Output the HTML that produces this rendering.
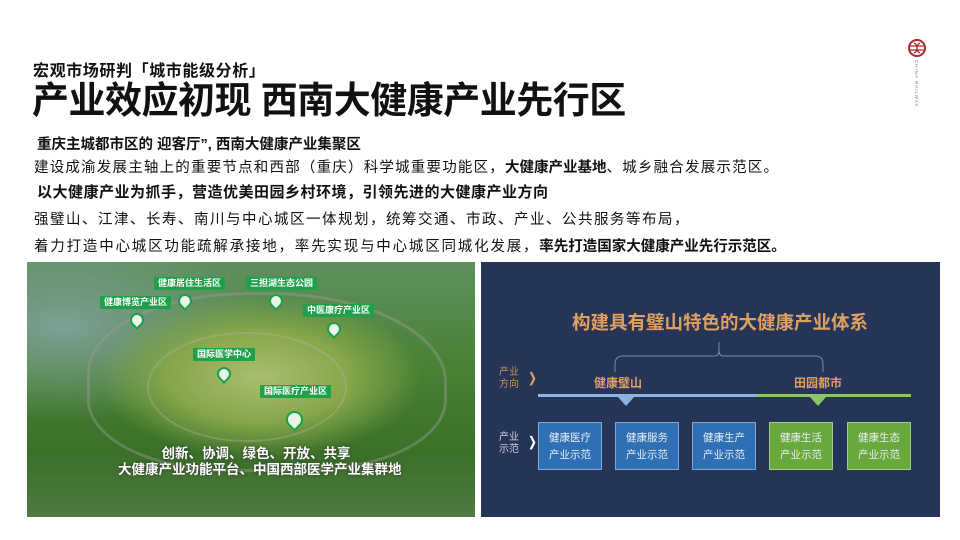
<!DOCTYPE html>
<html><head><meta charset="utf-8"><style>
*{margin:0;padding:0;box-sizing:border-box}
body{width:960px;height:540px;background:#fff;position:relative;overflow:hidden;font-family:"Liberation Sans","Noto Sans CJK SC",sans-serif;color:#111}
.a{position:absolute;white-space:nowrap}
.b{font-weight:bold}
.lbl{position:absolute;background:#1fa04a;color:#fff;font-size:9px;font-weight:bold;padding:1px 4px;line-height:11px;white-space:nowrap}
.pin{position:absolute;width:14px;height:14px;border:2px solid #1aa04a;background:#e8f5e8;border-radius:50% 50% 50% 0;transform:rotate(-45deg)}
.box{position:absolute;top:422px;width:64px;height:48px;color:#e8eef6;font-size:10.5px;text-align:center;line-height:17px;padding-top:7px;border:1px solid rgba(255,255,255,.4)}
</style></head><body>
<div class="a b" style="left:33px;top:57px;font-size:16px;letter-spacing:0.6px">宏观市场研判「城市能级分析」</div>
<div class="a b" style="left:32px;top:79px;font-size:37px;letter-spacing:-0.5px;line-height:44px">产业效应初现&nbsp;西南大健康产业先行区</div>
<div class="a b" style="left:37px;top:133px;font-size:14.5px">重庆主城都市区的 迎客厅”, 西南大健康产业集聚区</div>
<div class="a" style="left:34px;top:156px;font-size:14.5px;letter-spacing:1.2px">建设成渝发展主轴上的重要节点和西部（重庆）科学城重要功能区，<b style="letter-spacing:0">大健康产业基地</b>、城乡融合发展示范区。</div>
<div class="a b" style="left:37px;top:181px;font-size:15px;letter-spacing:0.5px">以大健康产业为抓手，营造优美田园乡村环境，引领先进的大健康产业方向</div>
<div class="a" style="left:34px;top:208px;font-size:14.5px;letter-spacing:1.5px">强璧山、江津、长寿、南川与中心城区一体规划，统筹交通、市政、产业、公共服务等布局，</div>
<div class="a" style="left:34px;top:235px;font-size:14.5px;letter-spacing:1.8px">着力打造中心城区功能疏解承接地，率先实现与中心城区同城化发展，<b style="letter-spacing:0">率先打造国家大健康产业先行示范区。</b></div>
<svg class="a" style="left:907px;top:38px" width="20" height="20" viewBox="0 0 20 20"><circle cx="10" cy="10" r="8" fill="none" stroke="#b0282c" stroke-width="2"/><path d="M3 8h14M3 12h14M7 5c4 2 4 8 0 10M13 5c-4 2-4 8 0 10" stroke="#b0282c" stroke-width="1.3" fill="none"/></svg>
<div class="a" style="left:914px;top:60px;font-size:4.5px;color:#777;writing-mode:vertical-rl;letter-spacing:1px">CHINA RAILWAY</div>

<div class="a" style="left:27px;top:262px;width:448px;height:255px;overflow:hidden;background:radial-gradient(ellipse 45% 40% at 52% 45%,#a8bf70 0%,#86a64a 45%,transparent 80%),radial-gradient(ellipse at 8% 25%,#7d9f96,transparent 35%),linear-gradient(180deg,#5f8f5e 0%,#4a8236 40%,#3a7028 75%,#4f7a42 100%)">
<div class="a" style="left:60px;top:30px;width:360px;height:180px;border:3px solid rgba(150,155,145,.45);border-radius:45% 50% 40% 40%"></div>
<div class="a" style="left:120px;top:70px;width:200px;height:110px;border:2px solid rgba(180,180,170,.35);border-radius:50%"></div>
</div>
<div class="lbl" style="left:154px;top:277px">健康居住生活区</div>
<div class="lbl" style="left:246px;top:277px">三担湖生态公园</div>
<div class="lbl" style="left:100px;top:296px">健康博览产业区</div>
<div class="lbl" style="left:303px;top:304px">中医康疗产业区</div>
<div class="lbl" style="left:193px;top:348px">国际医学中心</div>
<div class="lbl" style="left:260px;top:385px">国际医疗产业区</div>
<div class="pin" style="left:130px;top:313px"></div>
<div class="pin" style="left:178px;top:294px"></div>
<div class="pin" style="left:269px;top:294px"></div>
<div class="pin" style="left:327px;top:322px"></div>
<div class="pin" style="left:217px;top:367px"></div>
<div class="pin" style="left:286px;top:411px;width:17px;height:17px"></div>
<div class="a b" style="left:118px;top:446px;width:276px;text-align:center;color:#fff;font-size:13.5px;line-height:16px;text-shadow:0 0 3px #333">创新、协调、绿色、开放、共享<br>大健康产业功能平台、中国西部医学产业集群地</div>

<div class="a" style="left:481px;top:262px;width:459px;height:255px;background:#263457"></div>
<div class="a b" style="left:560px;top:309px;width:320px;text-align:center;color:#e0a060;font-size:18.5px">构建具有璧山特色的大健康产业体系</div>
<svg class="a" style="left:600px;top:334px" width="240" height="40"><path d="M15 38V30q0-8 8-8h92q4 0 4-6v-8v8q0 6 4 6h92q8 0 8 8v8" fill="none" stroke="#7888a8" stroke-width="1"/></svg>
<div class="a" style="left:499px;top:367px;color:#c9905a;font-size:10px;line-height:12px">产业<br>方向</div>
<div class="a b" style="left:527px;top:370px;color:#e0a060;font-size:13px">❭</div>
<div class="a b" style="left:594px;top:374px;color:#e0a060;font-size:12px">健康璧山</div>
<div class="a b" style="left:794px;top:374px;color:#e0a060;font-size:12px">田园都市</div>
<div class="a" style="left:538px;top:394px;width:218px;height:3px;background:#8db4de"></div>
<div class="a" style="left:756px;top:394px;width:155px;height:3px;background:#8cc46a"></div>
<div class="a" style="left:618px;top:397px;border-left:8px solid transparent;border-right:8px solid transparent;border-top:9px solid #8db4de"></div>
<div class="a" style="left:810px;top:397px;border-left:8px solid transparent;border-right:8px solid transparent;border-top:9px solid #8cc46a"></div>
<div class="a" style="left:499px;top:432px;color:#c8d0e0;font-size:10px;line-height:12px">产业<br>示范</div>
<div class="a b" style="left:527px;top:434px;color:#fff;font-size:13px">❭</div>
<div class="box" style="left:538px;background:#2f6fb4">健康医疗<br>产业示范</div>
<div class="box" style="left:615px;background:#2f6fb4">健康服务<br>产业示范</div>
<div class="box" style="left:692px;background:#2f6fb4">健康生产<br>产业示范</div>
<div class="box" style="left:769px;background:#68a83c">健康生活<br>产业示范</div>
<div class="box" style="left:847px;background:#68a83c">健康生态<br>产业示范</div>
</body></html>
